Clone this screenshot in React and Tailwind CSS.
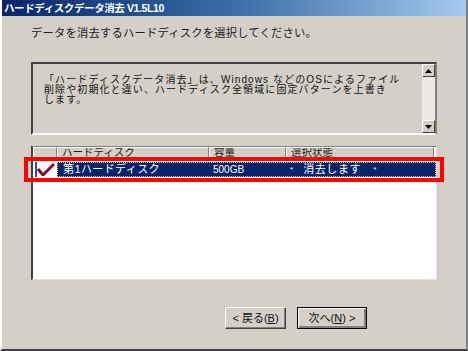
const FONT = { fontFamily: '"Liberation Sans", "Noto Sans CJK JP", sans-serif' }

function ScrollBtn({ dir }) {
  return (
    <div className="w-[13px] h-[13px] bg-[#d4d0c8] border border-t-white border-l-white border-r-[#404040] border-b-[#404040] flex items-center justify-center">
      <svg width="7" height="4" viewBox="0 0 7 4">
        {dir === 'up' ? (
          <path d="M3.5 0 L7 4 L0 4 Z" fill="#000" />
        ) : (
          <path d="M0 0 L7 0 L3.5 4 Z" fill="#000" />
        )}
      </svg>
    </div>
  )
}

function HeaderCell({ w, children }) {
  return (
    <div
      className="h-[13px] bg-[#d4d0c8] border-t border-l border-t-white border-l-white border-r border-b border-r-[#808080] border-b-[#808080] pl-[4px] text-[10.5px] leading-[9px] text-[#202020] shrink-0 overflow-hidden"
      style={{ width: w }}
    >
      {children}
    </div>
  )
}

export default function App() {
  return (
    <div
      className="w-[468px] h-[351px] bg-[#d4d0c8] border-l-2 border-l-white border-r-2 border-r-[#808080] border-b-2 border-b-[#404040] flex flex-col overflow-hidden"
      style={FONT}
    >
      {/* Title bar */}
      <div className="h-[16px] shrink-0 bg-gradient-to-r from-[#0a246a] via-[#3a6ea5] to-[#a6caf0] flex items-center pl-[2px]">
        <span className="text-white font-bold text-[10.5px] leading-none tracking-[-0.4px]">
          ハードディスクデータ消去 V1.5L10
        </span>
      </div>

      <div className="pl-[29px] pr-[29px] flex flex-col">
        <p className="mt-[10px] text-[11.3px] leading-[14px] text-[#202020] tracking-[0.2px]">
          データを消去するハードディスクを選択してください。
        </p>

        {/* Info box */}
        <div className="mt-[22px] h-[73px] border-2 border-t-[#404040] border-l-[#404040] border-r-[#808080] border-b-white flex">
          <div className="flex-1 pl-[11px] pt-[11px] text-[10px] leading-[10px] text-[#111] tracking-[1.1px]">
            <p>「ハードディスクデータ消去」は、Windows などのOSによるファイル</p>
            <p>削除や初期化と違い、ハードディスク全領域に固定パターンを上書き</p>
            <p>します。</p>
          </div>
          <div className="w-[13px] flex flex-col">
            <ScrollBtn dir="up" />
            <div className="flex-1 bg-[#ebe9e5]" />
            <ScrollBtn dir="down" />
          </div>
        </div>

        {/* List */}
        <div className="relative mt-[11px]">
          <div className="h-[134px] bg-white border-l-2 border-t border-l-[#404040] border-t-[#808080] border-r border-b border-r-[#e0e0e0] border-b-[#e0e0e0] flex flex-col">
            <div className="flex">
              <HeaderCell w={24} />
              <HeaderCell w={152}>ハードディスク</HeaderCell>
              <HeaderCell w={77}>容量</HeaderCell>
              <HeaderCell w={148}>選択状態</HeaderCell>
            </div>
            <div className="flex items-center mt-[2px] h-[15px]">
              <div className="w-[24px] flex justify-center">
                <div className="w-[20px] h-[15px] bg-white border-l-2 border-l-[#3050a0] flex items-center justify-center">
                  <svg width="18" height="13" viewBox="0 0 18 13">
                    <path d="M1 6 L6 12 L17 1" stroke="#8a0b2e" strokeWidth="3" fill="none" />
                  </svg>
                </div>
              </div>
              <div className="flex-1 h-[15px] bg-[#0a246a] border border-dotted border-[#d8c880] flex items-center text-white text-[11px] leading-none">
                <span className="w-[152px] pl-[5px] tracking-[0.4px]">第1ハードディスク</span>
                <span className="w-[77px] pl-[3px] text-[10px]">500GB</span>
                <span className="pl-[3px] flex items-center">
                  <span className="text-[8px]">*</span>
                  <span className="ml-[10px] tracking-[0.6px]">消去します</span>
                  <span className="ml-[12px] text-[8px]">*</span>
                </span>
              </div>
            </div>
          </div>
          {/* red highlight annotation */}
          <div className="absolute left-[-7px] top-[11px] w-[420px] h-[25px] border-4 border-[#ff0000] pointer-events-none" />
        </div>

        {/* Buttons */}
        <div className="mt-[27px] flex pl-[194px] gap-[11px]">
          <button className="w-[61px] h-[22px] bg-[#d4d0c8] border border-t-white border-l-white border-r-[#404040] border-b-[#404040] shadow-[inset_-1px_-1px_0_#808080] text-[11px] leading-none text-[#111]">
            &lt; 戻る(<span className="underline">B</span>)
          </button>
          <button className="w-[70px] h-[22px] bg-[#d4d0c8] border border-black shadow-[inset_1px_1px_0_#fff,inset_-2px_-2px_0_#808080] text-[11px] leading-none text-[#111]">
            次へ(<span className="underline">N</span>) &gt;
          </button>
        </div>
      </div>
    </div>
  )
}
